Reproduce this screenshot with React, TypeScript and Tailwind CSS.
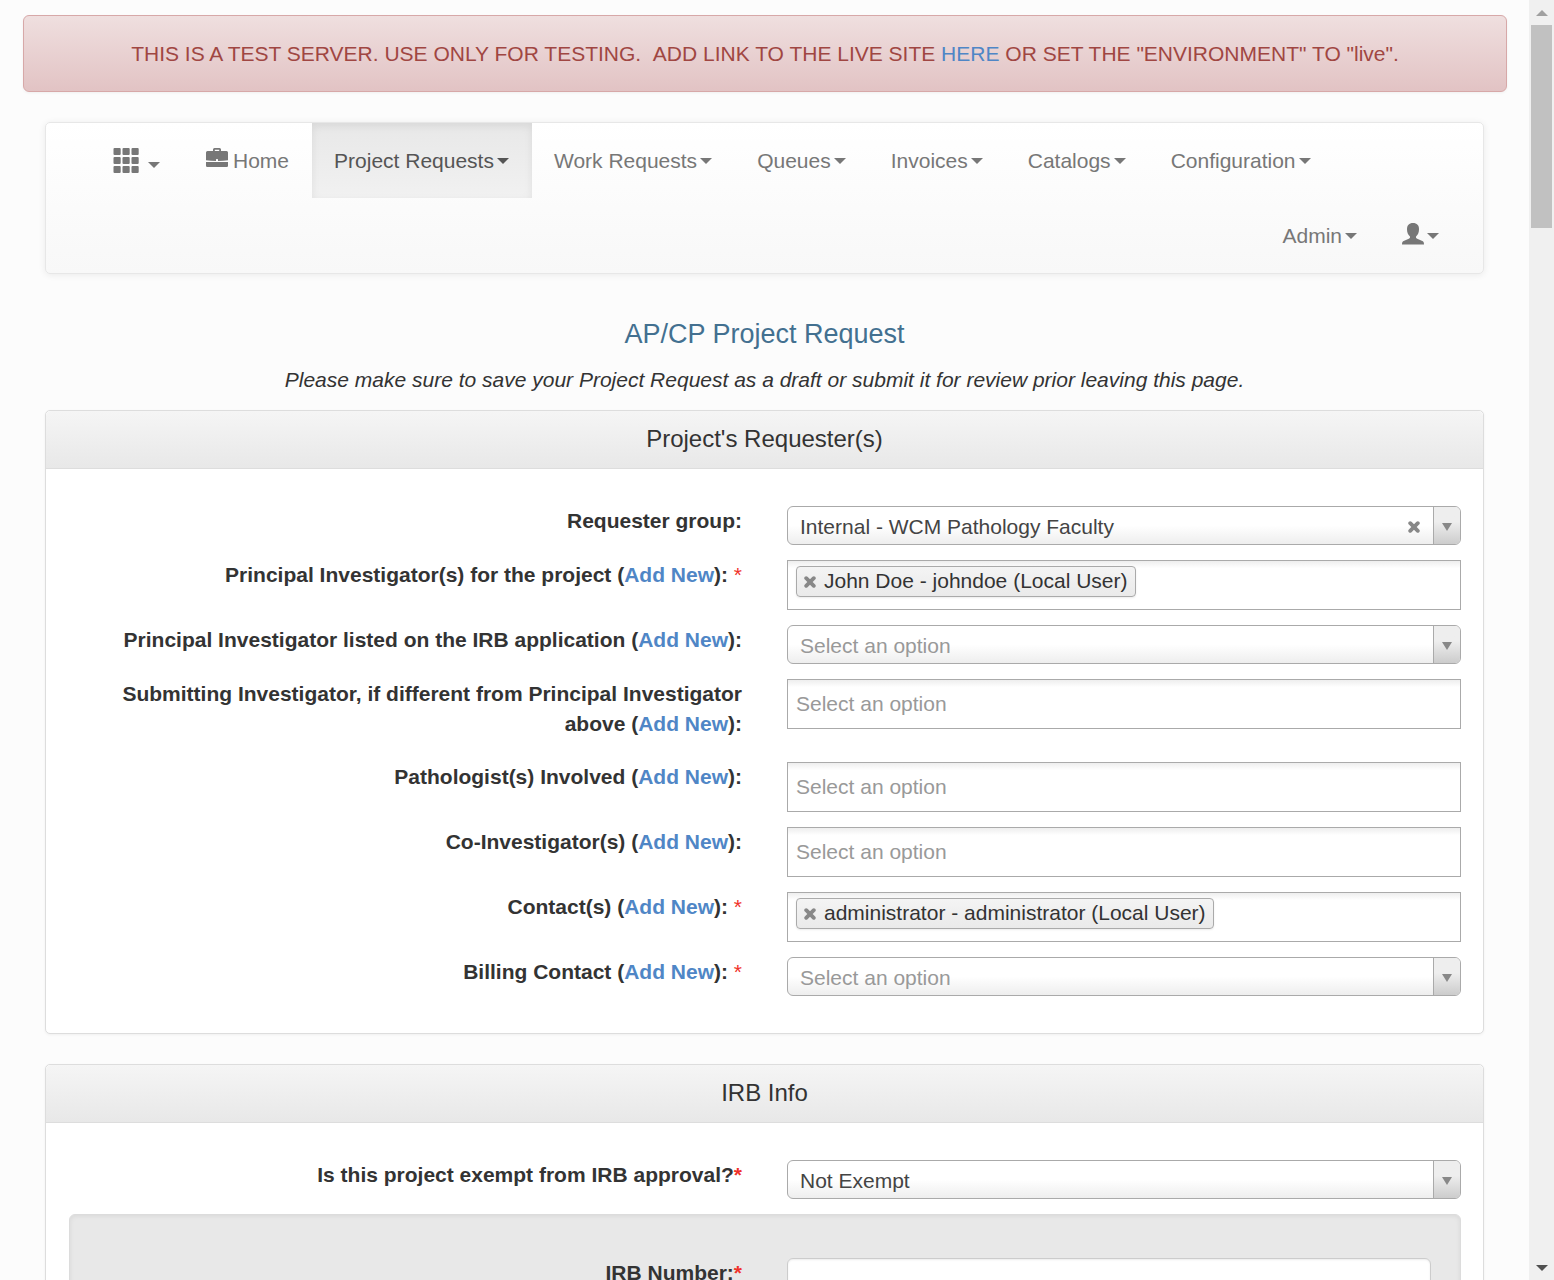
import React from "react";

function Caret() {
  return (
    <svg width="12" height="6" viewBox="0 0 12 6" fill="currentColor" aria-hidden="true" className="ml-[3px] shrink-0">
      <path d="M0 0h12L6 6z" />
    </svg>
  );
}

function GridIcon() {
  return (
    <svg width="27" height="26" viewBox="0 0 27 26" fill="currentColor" aria-hidden="true">
      {[0, 9, 18].map((y) =>
        [0, 9, 18].map((x) => <rect key={`${x}-${y}`} x={x + 1.5} y={y} width="7.200" height="7" rx="1" />),
      )}
    </svg>
  );
}

function BriefcaseIcon() {
  return (
    <svg width="22" height="20" viewBox="0 0 22 20" fill="currentColor" aria-hidden="true" className="mb-[6px]">
      <path
        fillRule="evenodd"
        d="M7 3V1.500Q7 0 8.500 0h5Q15 0 15 1.500V3h5.500Q22 3 22 4.500V12.200Q17.500 13 12 13V11.800Q12 10.900 11.400 10.900H10.600Q10 10.900 10 11.800V13Q4.500 13 0 12.200V4.500Q0 3 1.500 3zM8.800 3h4.400V1.700H8.800z"
      />
      <path d="M0 14h22v3.700Q22 19 20.700 19H1.300Q0 19 0 17.700z" />
    </svg>
  );
}

function UserIcon() {
  return (
    <svg width="22" height="22" viewBox="0 0 22 22" fill="currentColor" aria-hidden="true" className="mb-[4px]">
      <path d="M11 0C15 0 17 2.300 17 6.200C17 9.300 15.900 11.800 14.200 13.300C13.700 14.600 14 15.200 15.200 15.800L19.800 17.800C21.500 18.600 22 19.400 22 21.500H0C0 19.400 .5 18.600 2.200 17.800L6.800 15.800C8 15.200 8.300 14.600 7.800 13.300C6.100 11.800 5 9.300 5 6.200C5 2.300 7 0 11 0z" />
    </svg>
  );
}

function CrossIcon() {
  return (
    <svg width="12" height="12" viewBox="0 0 12 12" stroke="#888" strokeWidth="3.800" strokeLinecap="round" aria-hidden="true">
      <path d="M2.200 2.200l7.600 7.600M9.800 2.200l-7.600 7.600" />
    </svg>
  );
}

const menus = ["Project Requests", "Work Requests", "Queues", "Invoices", "Catalogs", "Configuration"];

function NavItem({ children, active, label }: { children: React.ReactNode; active?: boolean; label?: string }) {
  const base = "flex h-[75px] items-center whitespace-nowrap pl-[22px] pr-[23px]";
  return (
    <li>
      <button
        type="button"
        aria-label={label}
        className={
          active
            ? `${base} bg-linear-to-b from-[#e8e8e8] to-[#f1f1f1] text-[#555] shadow-[inset_0_3px_9px_rgba(0,0,0,0.075)]`
            : `${base} text-[#777]`
        }
      >
        {children}
      </button>
    </li>
  );
}

function Navbar() {
  return (
    <nav className="mx-[22px] mt-[30px] rounded-[5px] border border-[#e7e7e7] bg-linear-to-b from-white to-[#f8f8f8] pl-[44px] pr-[21px] shadow-[0_1px_7px_rgba(0,0,0,0.075)]">
      <ul className="flex flex-wrap">
        <NavItem label="Applications">
          <GridIcon />
          <span className="ml-[6px] mt-[9px]">
            <Caret />
          </span>
        </NavItem>
        <li>
          <a href="#home" className="flex h-[75px] items-center gap-[5px] px-[23px] text-[#777]">
            <BriefcaseIcon />
            Home
          </a>
        </li>
        {menus.map((m, i) => (
          <NavItem key={m} active={i === 0}>
            {m}
            <Caret />
          </NavItem>
        ))}
      </ul>
      <ul className="flex justify-end">
        <NavItem>
          Admin
          <Caret />
        </NavItem>
        <NavItem label="Account">
          <UserIcon />
          <Caret />
        </NavItem>
      </ul>
    </nav>
  );
}

function Panel({ title, children }: { title: string; children: React.ReactNode }) {
  return (
    <section className="mx-[22px] mb-[30px] rounded-[5px] border border-[#ddd] bg-white shadow-[0_1px_3px_rgba(0,0,0,0.05)]">
      <h2 className="rounded-t-[5px] border-b border-[#ddd] bg-linear-to-b from-[#f5f5f5] to-[#e8e8e8] pb-[15px] pt-[13px] text-center text-[24px] leading-[29px]">
        {title}
      </h2>
      <div className="flex flex-col gap-[15px] py-[37px] pl-[23px] pr-[22px]">{children}</div>
    </section>
  );
}

interface FieldProps {
  id: string;
  before: string;
  addNew?: boolean;
  required?: boolean;
  tight?: boolean;
  children: React.ReactNode;
}

function Field({ id, before, addNew, required, tight, children }: FieldProps) {
  return (
    <div className="grid grid-cols-2 gap-[44px]">
      <div className="pb-[8px] pr-px text-right font-bold">
        <label htmlFor={id}>{before}</label>
        {addNew && (
          <>
            {" ("}
            <a href="#add-new" className="text-[#4f86c6]">
              Add New
            </a>
            ):
          </>
        )}
        {required && (
          <span className={tight ? "text-[#f0322b]" : "font-normal text-[#f0322b]"}>
            {tight ? "*" : " *"}
          </span>
        )}
      </div>
      <div>{children}</div>
    </div>
  );
}

function SingleSelect({ id, value, clearable }: { id: string; value?: string; clearable?: boolean }) {
  return (
    <div className="flex h-[39px] overflow-hidden rounded-[6px] border border-[#aaa] bg-linear-to-t from-[#eee] to-white to-50%">
      <select
        id={id}
        className={
          value
            ? "min-w-0 flex-1 appearance-none bg-transparent pl-[12px] pt-[3px] text-[#444] outline-none"
            : "min-w-0 flex-1 appearance-none bg-transparent pl-[12px] pt-[3px] text-[#999] outline-none"
        }
      >
        <option>{value ?? "Select an option"}</option>
      </select>
      {clearable && (
        <button type="button" aria-label="Clear selection" className="px-[13px] pt-[3px]">
          <CrossIcon />
        </button>
      )}
      <span className="pointer-events-none flex w-[27px] justify-center border-l border-[#aaa] bg-linear-to-t from-[#ccc] to-[#eee] to-60% pt-[16px]">
        <svg width="10" height="8" viewBox="0 0 10 8" fill="#888" aria-hidden="true">
          <path d="M0 0h10L5 8z" />
        </svg>
      </span>
    </div>
  );
}

function MultiSelect({ id, value }: { id: string; value?: string }) {
  return (
    <div className="flex h-[50px] items-start border border-[#aaa] bg-linear-to-b from-[#eee] to-white to-15% pl-[8px]">
      {value && (
        <span className="mt-[5px] flex h-[31px] items-center rounded-[4px] border border-[#aaa] bg-linear-to-b from-[#f4f4f4] to-[#eaeaea] px-[7px] pb-[2px] text-[#333] shadow-[0_1px_2px_rgba(0,0,0,0.08)]">
          <button type="button" aria-label={`Remove ${value}`} className="mr-[8px] pt-[2px]">
            <CrossIcon />
          </button>
          {value}
        </span>
      )}
      <input
        id={id}
        type="text"
        placeholder={value ? undefined : "Select an option"}
        className="h-[48px] min-w-0 flex-1 bg-transparent outline-none placeholder:text-[#999]"
      />
    </div>
  );
}

function Scrollbar() {
  return (
    <div aria-hidden="true" className="flex w-[25px] shrink-0 flex-col items-center bg-[#f0f0f0]">
      <div className="flex h-[25px] items-center">
        <svg width="12" height="6" viewBox="0 0 12 6" fill="#a0a0a0">
          <path d="M0 6h12L6 0z" />
        </svg>
      </div>
      <div className="h-[203px] w-[21px] bg-[#c1c1c1]" />
      <div className="mt-auto flex h-[25px] items-center">
        <svg width="12" height="6" viewBox="0 0 12 6" fill="#505050">
          <path d="M0 0h12L6 6z" />
        </svg>
      </div>
    </div>
  );
}

export default function App() {
  return (
    <div className="flex h-screen overflow-hidden bg-[#fcfcfc] font-['Liberation_Sans',Arial,sans-serif] text-[21px] leading-[30px] text-[#333]">
      <main className="min-w-0 flex-1 overflow-hidden px-[23px] pt-[15px]">
        <div
          role="alert"
          className="-mr-px rounded-[6px] border border-[#d7a8a8] bg-linear-to-b from-[#efdfdf] to-[#e2c3c4] px-[22px] pb-[22px] pt-[23px] text-center text-[#a04642] shadow-[0_1px_3px_rgba(0,0,0,0.05)]"
        >
          THIS IS A TEST SERVER. USE ONLY FOR TESTING. &nbsp;ADD LINK TO THE LIVE SITE{" "}
          <a href="#live" className="text-[#4f86c6]">
            HERE
          </a>{" "}
          OR SET THE "ENVIRONMENT" TO "live".
        </div>
        <Navbar />
        <h1 className="mt-[45px] text-center text-[27px] leading-[30px] text-[#437090]">AP/CP Project Request</h1>
        <p className="mb-[15px] mt-[16px] text-center italic">
          Please make sure to save your Project Request as a draft or submit it for review prior leaving this page.
        </p>
        <Panel title="Project's Requester(s)">
          <Field id="group" before="Requester group:">
            <SingleSelect id="group" value="Internal - WCM Pathology Faculty" clearable />
          </Field>
          <Field id="pis" before="Principal Investigator(s) for the project" addNew required>
            <MultiSelect id="pis" value="John Doe - johndoe (Local User)" />
          </Field>
          <Field id="irb-pi" before="Principal Investigator listed on the IRB application" addNew>
            <SingleSelect id="irb-pi" />
          </Field>
          <Field id="submitter" before="Submitting Investigator, if different from Principal Investigator above" addNew>
            <MultiSelect id="submitter" />
          </Field>
          <Field id="pathologists" before="Pathologist(s) Involved" addNew>
            <MultiSelect id="pathologists" />
          </Field>
          <Field id="co" before="Co-Investigator(s)" addNew>
            <MultiSelect id="co" />
          </Field>
          <Field id="contacts" before="Contact(s)" addNew required>
            <MultiSelect id="contacts" value="administrator - administrator (Local User)" />
          </Field>
          <Field id="billing" before="Billing Contact" addNew required>
            <SingleSelect id="billing" />
          </Field>
        </Panel>
        <Panel title="IRB Info">
          <Field id="exempt" before="Is this project exempt from IRB approval?" required tight>
            <SingleSelect id="exempt" value="Not Exempt" />
          </Field>
          <div className="rounded-[6px] border border-[#dcdcdc] bg-[#e8e8e8] px-[29px] py-[43px] shadow-[inset_0_1px_5px_rgba(0,0,0,0.07)]">
            <Field id="irb-number" before="IRB Number:" required tight>
              <input
                id="irb-number"
                type="text"
                className="block h-[51px] w-full rounded-[6px] border border-[#ccc] bg-white px-[18px] shadow-[inset_0_1px_2px_rgba(0,0,0,0.075)] outline-none"
              />
            </Field>
          </div>
        </Panel>
      </main>
      <Scrollbar />
    </div>
  );
}
